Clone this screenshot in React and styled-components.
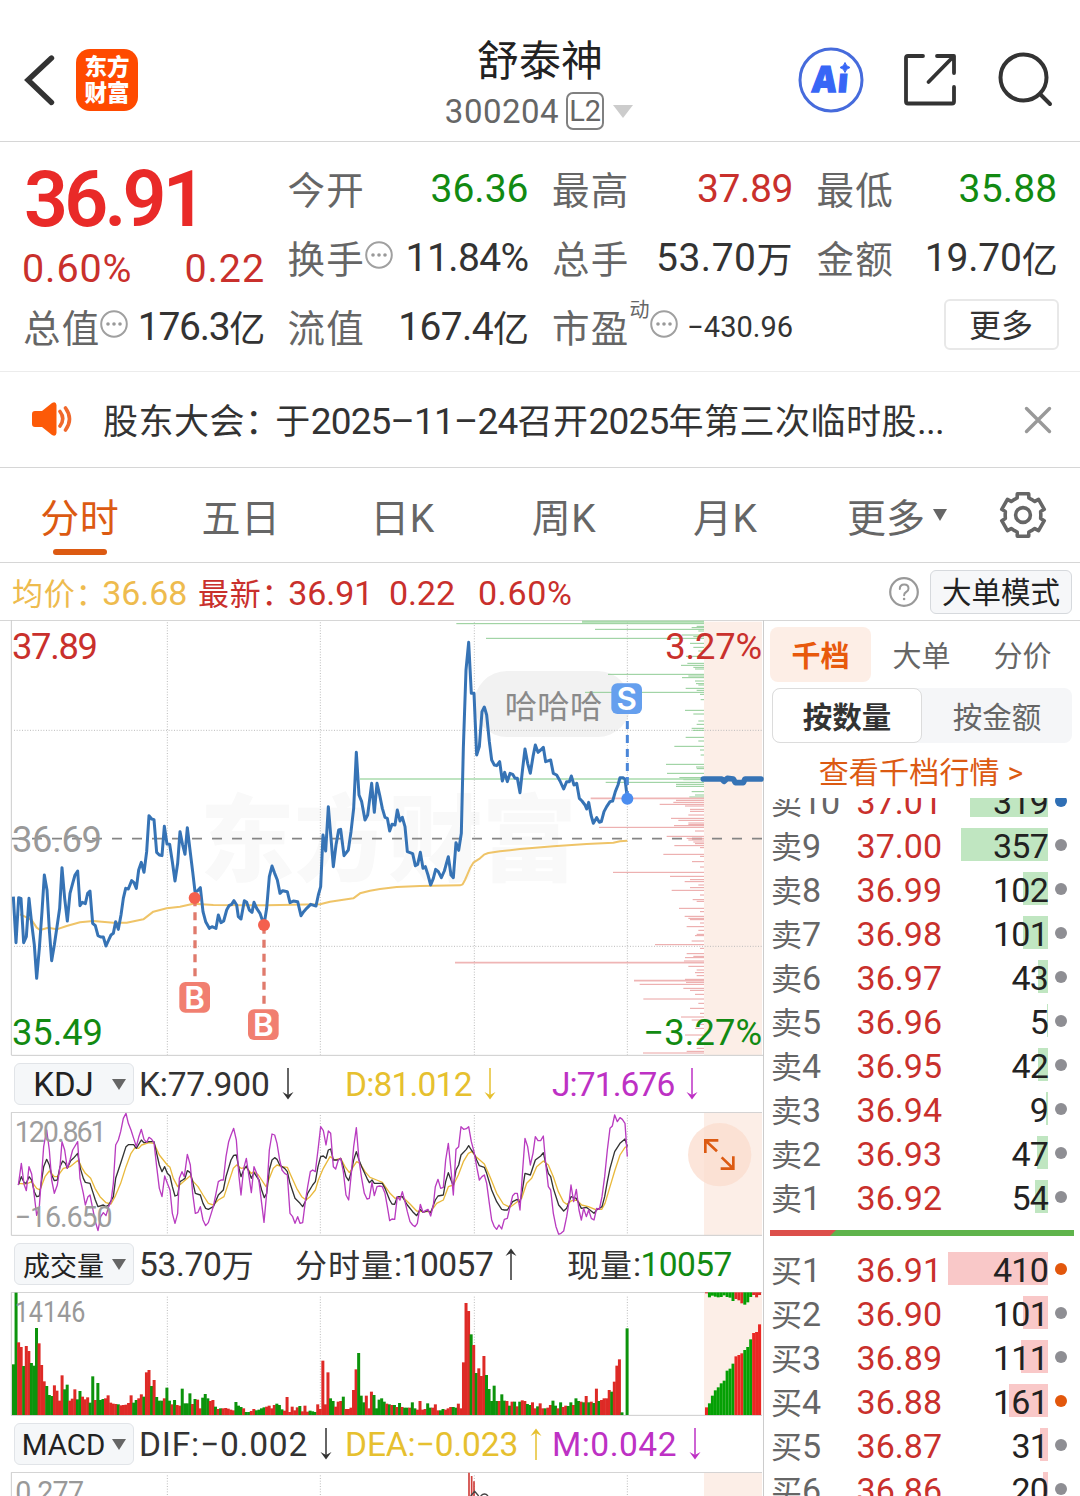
import React from "react";
import styled, { createGlobalStyle } from "styled-components";

const RED = "#c9302c";
const GREEN = "#128a12";
const YELLOW = "#e6c02f";
const PURPLE = "#bd31c4";
const ORANGE = "#dc5a12";

const GlobalStyle = createGlobalStyle`
  * {
    box-sizing: border-box;
  }
  body {
    margin: 0;
    background: #fff;
    color: #333;
    font-family: Roboto, "Noto Sans CJK SC", sans-serif;
  }
`;

/* ---------- chart data, three units to a pixel ---------- */

const shift = (points, dx) =>
  points
    .split(" ")
    .map((p) => {
      const [x, y] = p.split(",");
      return `${Number(x) + dx},${y}`;
    })
    .join(" ");

const HALF = 1140;

const priceLine =
  "40,845 48,983 56,848 63,850 71,983 79,965 87,850 95,925 103,990 110,1090 118,1000 126,890 133,780 141,825 148,945 155,1037 163,990 171,935 179,880 186,758 194,850 202,918 210,835 218,805 225,780 233,768 240,872 247,862 256,866 263,835 270,828 278,925 286,932 294,962 302,966 310,966 318,993 326,975 333,960 340,955 347,920 355,943 363,900 370,850 377,820 385,822 395,797 402,803 409,820 416,765 424,742 432,772 440,710 447,602 455,612 462,614 470,712 478,720 486,722 493,634 501,687 509,688 517,740 525,798 533,745 540,650 548,690 555,718 562,638 570,705 578,770 585,830 592,828 601,818 609,890 617,920 628,940 636,935 648,940 655,900 663,923 671,918 680,885 687,872 695,868 702,857 710,870 715,905 723,912 733,857 740,862 748,885 756,892 762,862 770,880 780,895 792,930 800,880 808,785 816,753 824,775 832,795 840,835 848,827 862,830 870,863 880,858 893,860 903,902 911,890 920,880 932,868 948,873 955,840 962,815 969,660 977,708 985,575 993,670 1000,755 1008,690 1016,645 1022,643 1032,722 1045,705 1053,650 1061,580 1069,412 1077,540 1085,560 1095,615 1103,600 1115,505 1123,592 1131,505 1139,540 1147,580 1155,607 1162,610 1169,648 " +
  shift(
    "36,628 45,630 52,585 60,618 67,607 75,635 82,710 98,716 106,752 113,748 121,712 129,760 136,755 144,780 152,810 160,790 167,763 175,770 184,788 193,768 205,725 213,780 220,788 228,683 236,706 244,655 250,400 258,165 266,82 274,235 282,235 290,420 298,395 306,290 313,276 320,300 328,380 335,435 343,450 350,452 359,440 367,498 374,472 382,500 390,475 398,478 405,490 412,490 420,533 428,460 435,402 443,445 451,475 459,425 466,390 474,412 482,405 490,397 497,440 512,435 520,475 530,480 540,498 551,522 560,500 568,500 574,483 582,510 590,505 598,550 606,558 615,570 620,582 626,562 633,600 640,625 650,608 658,622 664,620 672,590 680,575 690,560 698,558 706,530 714,510 720,488 728,488 735,492 742,550",
    HALF
  );

const averageLine =
  "60,898 75,905 95,915 110,938 120,945 145,938 170,943 200,933 240,922 280,918 340,923 380,923 430,913 460,890 500,880 540,875 580,866 640,870 800,871 960,868 990,860 1060,850 1080,835 1110,827 " +
  shift(
    "0,822 50,816 120,813 240,811 248,808 255,795 270,760 280,743 300,730 312,719 325,714 360,709 420,702 520,694 620,687 700,683 720,679 742,677",
    HALF
  );

const auctionLine = shift(
  "970,492 1025,492 1032,499 1042,490 1060,492 1066,503 1090,503 1095,492 1143,492",
  HALF
);

const jLine =
  "55,405 64,340 72,402 79,422 87,350 95,372 110,496 118,470 131,290 140,240 148,300 155,390 163,430 172,405 180,350 186,275 194,300 202,355 210,330 218,300 233,275 240,385 250,430 256,465 264,440 270,435 278,475 286,515 294,542 302,500 310,488 318,497 326,470 333,455 340,400 347,285 355,270 362,245 370,205 378,190 385,220 393,240 401,265 409,290 416,262 424,238 432,268 440,277 447,262 455,268 462,278 470,350 478,415 486,440 494,378 502,400 510,420 517,490 525,520 533,490 538,385 546,365 553,380 562,313 571,345 578,430 586,490 594,487 601,470 609,510 617,527 625,518 640,470 648,430 655,395 663,390 670,390 678,320 686,275 693,255 701,235 709,270 717,380 723,435 731,355 739,325 747,380 754,428 762,350 770,370 777,395 785,460 792,517 800,430 808,300 816,252 824,255 831,280 839,330 846,360 854,370 862,375 870,490 878,500 885,520 893,500 900,520 908,518 916,455 923,410 931,365 938,360 946,365 954,300 962,230 970,242 978,285 985,243 992,250 1000,350 1007,357 1015,330 1022,325 1030,365 1038,435 1046,450 1054,370 1061,290 1069,233 1077,330 1085,385 1093,430 1101,447 1108,445 1116,397 1123,437 1131,410 1139,408 1147,410 1155,430 1162,470 1169,512 " +
  shift(
    "36,507 44,508 52,440 60,450 67,425 75,455 82,485 90,515 98,525 105,530 112,520 121,463 129,487 136,482 144,478 152,498 160,465 166,410 174,388 182,415 190,412 197,330 205,280 213,360 220,435 228,298 236,290 243,230 251,238 259,236 266,230 274,275 282,305 290,350 298,390 306,380 313,375 320,400 328,460 335,510 343,530 350,538 357,525 365,537 373,508 382,505 390,470 398,437 405,430 412,430 420,480 428,360 435,265 443,290 451,345 459,310 466,260 474,272 482,272 490,258 497,340 505,410 512,420 520,490 528,530 536,553 543,550 551,543 560,500 568,450 573,405 581,455 589,418 597,480 604,510 611,475 619,500 626,480 634,505 642,510 650,475 658,478 666,440 674,380 682,300 690,235 697,228 704,195 712,215 720,203 727,208 735,220 742,320",
    HALF
  );

const kLine =
  "55,405 64,380 72,397 79,400 87,380 95,390 103,425 110,440 118,438 131,350 140,328 148,345 155,375 163,392 172,390 180,350 188,333 196,340 202,355 212,332 220,325 233,310 241,355 250,385 256,397 270,400 278,425 286,450 294,470 310,465 318,470 326,465 340,440 347,385 362,340 378,290 385,284 401,284 409,295 424,270 432,278 447,275 462,275 470,310 478,345 486,365 494,350 502,370 510,378 517,410 525,438 533,435 540,395 548,390 555,385 562,362 571,368 578,395 586,430 601,435 609,460 617,475 625,478 640,470 655,435 670,420 678,380 693,330 701,316 709,315 717,355 723,380 731,360 739,348 747,365 754,385 762,368 777,390 785,420 793,443 800,430 808,360 816,330 824,323 831,328 839,345 854,355 862,365 870,400 885,445 900,460 908,470 916,455 923,430 938,405 946,395 954,350 962,320 970,318 978,325 985,300 992,297 1000,330 1015,330 1022,325 1030,350 1038,380 1046,392 1054,365 1061,330 1069,305 1077,330 1085,350 1101,385 1108,398 1116,390 1123,400 1147,400 1155,415 1169,450 " +
  shift(
    "36,462 44,463 52,440 67,440 82,465 98,485 110,497 121,478 129,487 144,482 152,488 166,450 174,438 190,435 197,395 205,368 213,390 220,408 228,360 236,345 243,315 259,298 266,287 274,300 282,310 290,330 298,347 313,352 320,370 335,420 350,455 365,478 373,480 382,480 398,455 412,448 420,458 428,415 435,370 451,375 466,330 482,318 490,308 497,340 505,370 512,380 520,415 536,465 551,483 560,475 573,440 589,445 604,475 619,472 642,490 650,480 666,470 674,440 682,395 690,355 704,305 720,280 735,267 742,290",
    HALF
  );

const dLine =
  "55,400 79,402 95,395 110,415 120,420 135,380 148,363 163,380 172,380 190,355 210,350 235,330 245,352 256,370 272,385 285,415 300,440 318,458 333,462 345,440 362,400 378,350 393,310 405,293 416,295 425,285 447,278 462,280 478,315 490,330 502,345 510,352 520,385 533,410 550,395 570,378 580,395 594,410 609,435 625,460 640,465 655,450 672,440 685,400 700,355 710,345 723,355 739,352 754,370 762,365 775,375 785,390 798,410 808,385 820,355 831,345 845,350 862,352 872,375 890,415 905,440 918,450 930,440 946,420 955,390 970,355 990,320 1005,330 1022,325 1035,350 1048,368 1060,350 1070,335 1080,340 1095,365 1110,382 1130,390 1147,397 " +
  shift(
    "30,430 45,445 67,440 90,462 110,483 130,485 152,485 170,460 190,450 205,410 220,405 235,375 250,335 265,310 275,305 290,322 313,342 330,380 350,430 370,462 390,472 412,455 425,445 440,400 455,385 470,350 490,333 505,345 520,380 535,425 550,455 560,463 575,452 590,450 605,465 625,470 645,478 665,478 675,460 690,410 705,360 720,315 735,292 740,290",
    HALF
  );

// one bar a minute, below zero = falling minute
const volumes = [
  -152, -367, 218, 204, -147, 207, 192, -156, -148, -261, 215, 150, 101, -87,
  -60, -57, 89, 73, 43, 119, -77, -91, 43, 49, 77, -47, -72, 55, 47, 53, -37,
  -116, 45, -96, -45, -48, 50, 59, 37, 34, 33, -32, 29, 30, 31, 36, 59, -37,
  -45, 50, 62, -55, 128, 135, -87, 105, -54, -43, -43, 50, -82, -43, 32, -45,
  30, 28, -79, -35, -35, -65, 33, -48, 46, 20, -52, -63, -50, 42, 45, -25, 18,
  -20, 20, 21, 19, 16, 14, -39, -28, -24, 20, -9, -9, 12, 18, -14, -16, -20,
  -23, 25, 28, 20, 30, -34, -30, -17, 13, 54, 9, 25, 14, 23, -27, 11, 28, 10,
  -13, -11, -9, 32, 18, 163, 32, 128, -50, -42, 25, 40, 42, -55, 18, 18, 22,
  75, 137, -186, -58, -38, 58, 20, 70, -60, -20, -46, -50, -40, 34, -32, 30,
  -30, 24, -36, 24, -22, -22, 22, -38, -20, 16, 42, 16, 18, -35, -22, 22, 32,
  14, -14, -18, 16, 20, 24, -24, -22, 34, 20, 158, 336, 312, -242, 210, -126,
  140, 117, 177, -120, -78, -42, -88, -42, 42, -62, -43, 42, -28, 40, -40, 26,
  -40, 44, 42, -33, -30, 38, 20, -26, 35, 20, -20, 22, 30, -43, -28, 20, -38,
  24, 28, -27, -38, 30, -50, -42, 40, -38, 57, -38, 40, -36, 79, -42, 45, 50,
  50, 75, -70, 100, 148, 167, -8, 0, -260,
];

const auctionVolumes = [
  23, -35, -58, -74, -83, -95, -103, -133, -139, -154, 176, 180, 185, -195,
  -204, -227, 246, 249, 272,
];
const auctionRest = [
  3, -15, -10, -13, -15, -14, -9, -14, -16, -26, 20, 24, 33, -37, -30, -14, 8,
  15, 8,
];

// [y, left end] of resting orders at each price
const askDepth = [
  [20, 606], [26, 229], [34, 950], [38, 935], [43, 645], [48, 955], [60, 905],
  [70, 318], [65, 940], [85, 930], [97, 940], [108, 955], [124, 918],
  [145, 922], [151, 903], [157, 940], [162, 945], [178, 684], [183, 925],
  [188, 906], [198, 945], [206, 948], [220, 917], [210, 955], [226, 950],
  [232, 615], [238, 960], [254, 962], [286, 915], [297, 940], [318, 955],
  [328, 950], [340, 935], [346, 938], [367, 917], [378, 955], [394, 883],
  [405, 960], [420, 962], [448, 858], [456, 948], [461, 950], [475, 861],
  [488, 898], [494, 910], [502, 677], [508, 888], [514, 888], [530, 935],
  [540, 945], [546, 928],
];
const bidDepth = [
  [556, 888], [562, 880], [568, 839], [573, 915], [583, 930], [589, 930],
  [600, 925], [610, 873], [616, 895], [624, 925], [629, 925], [632, 882],
  [637, 657], [648, 945], [664, 860], [670, 920], [675, 925], [681, 940],
  [686, 945], [692, 883], [698, 960], [718, 850], [724, 960], [740, 936],
  [756, 960], [772, 699], [784, 870], [794, 930], [800, 914], [810, 955],
  [818, 930], [826, 875], [840, 960], [854, 938], [859, 950], [880, 897],
  [890, 960], [904, 914], [910, 925], [914, 930], [924, 960], [935, 920],
  [946, 955], [958, 950], [962, 945], [978, 935], [989, 825], [1000, 960],
  [1016, 920], [1024, 940], [1028, 915], [1038, 912], [1054, 925],
  [1065, 950], [1073, 945], [1082, 950], [1093, 915], [1102, 918],
  [1108, 779], [1120, 910], [1126, 930], [1138, 945], [1152, 790],
  [1165, 955], [1180, 930], [1195, 960], [1206, 903], [1215, 935],
  [1228, 950], [1240, 945], [1260, 915], [1272, 955], [1300, 950],
  [1309, 920], [1314, 789],
];

const sells = [
  ["卖10", "37.01", 319, "#2f6fb5"],
  ["卖9", "37.00", 357],
  ["卖8", "36.99", 102],
  ["卖7", "36.98", 101],
  ["卖6", "36.97", 43],
  ["卖5", "36.96", 5],
  ["卖4", "36.95", 42],
  ["卖3", "36.94", 9],
  ["卖2", "36.93", 47],
  ["卖1", "36.92", 54],
];

const buys = [
  ["买1", "36.91", 410, "#e2570c"],
  ["买2", "36.90", 101],
  ["买3", "36.89", 111],
  ["买4", "36.88", 161, "#e2570c"],
  ["买5", "36.87", 31],
  ["买6", "36.86", 20],
];

/* ---------- icons ---------- */

const BackIcon = () => (
  <svg width="36" height="56" viewBox="22 52 36 56" fill="none">
    <path d="M51.5 58 28 80l23.500 22.500" stroke="#333" strokeWidth="5.400" strokeLinecap="round" />
  </svg>
);

// the star stands in for the dot of the i
const AiIcon = () => (
  <svg width="66" height="66" viewBox="798 47 66 66" fill="#3766f6">
    <circle cx="831" cy="80" r="31" fill="#fff" stroke="#466bdc" strokeWidth="3" />
    <g transform="translate(811 91.500) skewX(-5)" fontFamily="Open Sans" fontSize="36" fontWeight="800" stroke="#3766f6" strokeWidth="1.400">
      <text x="0.500" y="0" textLength="24" lengthAdjust="spacingAndGlyphs">A</text>
      <text x="26" y="0.500" fontSize="32">ı</text>
    </g>
    <path d="M845 62.500q1 4 5 5-4 1-5 5-1-4-5-5 4-1 5-5Z" stroke="#3766f6" strokeWidth="1" />
  </svg>
);

const ShareIcon = () => (
  <svg width="56" height="56" viewBox="902 52 56 56" fill="none" stroke="#333" strokeWidth="3.800" strokeLinecap="round" strokeLinejoin="round">
    <path d="M923 56H908q-2 0-2 2v43.500q0 2 2 2h44q2 0 2-2V87" />
    <path d="M937 56h17v17M928.500 82 953 57" />
  </svg>
);

const SearchIcon = () => (
  <svg width="58" height="58" viewBox="996 51 58 58" fill="none" stroke="#333" strokeWidth="4" strokeLinecap="round">
    <circle cx="1023.500" cy="77.500" r="23" />
    <path d="m1040 94 10 10" />
  </svg>
);

const MoreDots = () => (
  <svg width="28" height="28" viewBox="0 0 28 28">
    <circle cx="14" cy="14" r="12.800" fill="none" stroke="#a0a0a0" strokeWidth="2" />
    {[8, 14, 20].map((x) => (
      <circle key={x} cx={x} cy="14" r="1.800" fill="#999" />
    ))}
  </svg>
);

const SpeakerIcon = () => (
  <svg width="42" height="36" viewBox="31 402 42 36">
    <path d="M35 411h7l10-8q4-2 4.500 2v28q-.5 4-4.500 2l-10-8h-7q-3 0-3-3v-10q0-3 3-3Z" fill="#fc5a08" />
    <path d="M60 411.500q5.500 7 0 14.500M65.500 408q8 11 0 22" fill="none" stroke="#f0682c" strokeWidth="3.600" strokeLinecap="round" />
  </svg>
);

const CloseIcon = () => (
  <svg width="28" height="28" viewBox="0 0 28 28" stroke="#999" strokeWidth="3.400" strokeLinecap="round">
    <path d="m2.500 2.500 23 23M25.500 2.500l-23 23" />
  </svg>
);

const gearPoints = [0, 60, 120, 180, 240, 300]
  .flatMap((a) => [
    [a - 28, 17.8],
    [a - 19, 18],
    [a - 15, 22],
    [a + 15, 22],
    [a + 19, 18],
    [a + 28, 17.8],
  ])
  .map(([a, r]) => {
    const t = ((a - 90) * Math.PI) / 180;
    return `${25 + r * Math.cos(t)},${25 + r * Math.sin(t)}`;
  })
  .join(" ");

const GearIcon = () => (
  <svg width="50" height="50" viewBox="0 0 50 50" fill="none" stroke="#666" strokeWidth="3.600" strokeLinejoin="round">
    <polygon points={gearPoints} />
    <circle cx="25" cy="25" r="7.400" />
  </svg>
);

const HelpIcon = () => (
  <svg width="30" height="30" viewBox="0 0 30 30">
    <circle cx="15" cy="15" r="13.800" fill="none" stroke="#999" strokeWidth="2.200" />
    <path d="M10.800 12q0-4.500 4.400-4.500 4.300 0 4.300 4 0 2.300-2.300 3.500-2.100 1.100-2.100 3.200" fill="none" stroke="#999" strokeWidth="2" strokeLinecap="round" />
    <circle cx="15.100" cy="22" r="1.300" fill="#999" />
  </svg>
);

const Arrow = ({ up, color }) => (
  <svg width="14" height="34" viewBox="0 0 14 34" transform={up ? "rotate(180)" : undefined}>
    <path d="M7 1v30" stroke={color} strokeWidth="1.500" />
    <path d="M1.500 25 7 32.500l5.500-7.500L7 28Z" fill={color} />
  </svg>
);

/* ---------- charts ---------- */

const COLS = [502, 961, 1423, 1882];

const Columns = ({ top, bottom }) =>
  COLS.map((x) => (
    <path key={x} d={`M${x} ${top}V${bottom}`} stroke="#bbb" strokeWidth="3" strokeDasharray="3 5" />
  ));

const Tag = ({ x, y, letter, color }) => (
  <g>
    <rect x={x - 46} y={y - 46} width="92" height="92" rx="18" fill={color} />
    <text x={x} y={y + 34} textAnchor="middle" fontFamily="Inter, Roboto, sans-serif" fontSize="94" fontWeight="600" fill="#fff">{letter}</text>
  </g>
);

const PriceChart = () => (
  <svg width="764" height="436" viewBox="0 15 2292 1308" fontFamily='Roboto, "Noto Sans CJK SC", sans-serif'>
    <text x="600" y="776" fontSize="284" fontWeight="900" letterSpacing="-2" fill="#f9f9f9">东方财富</text>
    <rect x="2112" y="20" width="174" height="1300" fill="#fceee7" />
    <rect x="1422" y="168" width="470" height="198" rx="99" fill="#f2f2f2" />
    <Columns top={22} bottom={1320} />
    <path d="M42 346H2286M42 994H2286" stroke="#bbb" strokeWidth="3" strokeDasharray="3 5" />
    <path d="M36 671H2286" stroke="#858585" strokeWidth="5" strokeDasharray="30 30" />
    <g strokeWidth="3">
      {askDepth.map(([y, x]) => (
        <path key={y} d={`M${x + HALF} ${y}H2112`} stroke="#90cc94" />
      ))}
      {bidDepth.map(([y, x]) => (
        <path key={y} d={`M${x + HALF} ${y}H2112`} stroke="#eaa2a2" />
      ))}
    </g>
    <path d="M1746 20H2112" stroke="#a9dbac" strokeWidth="7" />
    <path d="M1080 492H2112" stroke="#a9dbac" strokeWidth="5" />
    <path d="M1772 550H2112M1365 1043H2112M1902 1097H2112" stroke="#efb5b5" strokeWidth="5" />
    <text x="1514" y="310" fontSize="97" letterSpacing="1" fill="#8a8a8a">哈哈哈</text>
    <polyline points={averageLine} fill="none" stroke="#efc468" strokeWidth="6" strokeLinejoin="round" />
    <polyline points={priceLine} fill="none" stroke="#3673b5" strokeWidth="9" strokeLinejoin="round" />
    <polyline points={auctionLine} fill="none" stroke="#3673b5" strokeWidth="17" strokeLinecap="round" strokeLinejoin="round" />
    <g stroke="#e07a6c" strokeWidth="10" strokeDasharray="24 18">
      <path d="M585 850V1085" />
      <path d="M792 932V1168" />
    </g>
    <circle cx="584" cy="849" r="18" fill="#f4604e" />
    <circle cx="792" cy="930" r="18" fill="#f4604e" />
    <Tag x={584} y={1147} letter="B" color="#f17f70" />
    <Tag x={790} y={1229} letter="B" color="#f17f70" />
    <path d="M1882 318V550" stroke="#4a86d8" strokeWidth="9" strokeDasharray="24 18" />
    <circle cx="1882" cy="551" r="18" fill="#4b8df0" />
    <Tag x={1880} y={251} letter="S" color="#659fee" />
    <g fontSize="109">
      <text x="36" y="131" fill={RED} textLength="258">37.89</text>
      <text x="36" y="710" fill="#999" textLength="270">36.69</text>
      <text x="36" y="1289" fill={GREEN} textLength="273">35.49</text>
      <text x="2286" y="131" fill={RED} textAnchor="end" textLength="290">3.27%</text>
      <text x="2286" y="1289" fill={GREEN} textAnchor="end" textLength="356">−3.27%</text>
    </g>
    <path d="M34 15V1320M34 1321H2290" fill="none" stroke="#ccc" strokeWidth="3" />
  </svg>
);

const KdjChart = () => (
  <svg width="764" height="124" viewBox="0 186 2292 372" fontFamily="Roboto, sans-serif">
    <rect x="2112" y="188" width="174" height="368" fill="#fceee7" />
    <Columns top={195} bottom={550} />
    <g fill="none" strokeWidth="4" strokeLinejoin="round">
      <polyline points={dLine} stroke="#e9b93c" />
      <polyline points={kLine} stroke="#333" />
      <polyline points={jLine} stroke="#b93cc0" />
    </g>
    <g fontSize="86" fill="#999" opacity="0.95">
      <text x="44" y="276" textLength="276">120.861</text>
      <text x="44" y="530" textLength="294">−16.650</text>
    </g>
    <path d="M2286 187H34V556H2286" fill="none" stroke="#ccc" strokeWidth="3" />
    <circle cx="2159" cy="314" r="95" fill="#fbdccd" opacity="0.75" />
    <path d="M2116 309V271H2155M2118 273l33 31M2200 319V356H2162M2198 354l-33-32" fill="none" stroke={ORANGE} strokeWidth="8" />
  </svg>
);

const VolumeChart = () => (
  <svg width="764" height="124" viewBox="0 726 2292 372" fontFamily="Roboto, sans-serif">
    <rect x="2112" y="728" width="174" height="368" fill="#fceee7" />
    <Columns top={740} bottom={1090} />
    <path d="M2286 727H34V1096H2286" fill="none" stroke="#ccc" strokeWidth="3" />
    {volumes.map((v, i) => (
      <rect key={i} x={36 + i * 7.67} y={1095 - Math.abs(v)} width="9" height={Math.abs(v)} fill={v > 0 ? "#de2a26" : "#0c930c"} />
    ))}
    {auctionVolumes.map((v, i) => (
      <rect key={i} x={2115 + i * 8.84} y={1095 - Math.abs(v)} width="9" height={Math.abs(v)} fill={v > 0 ? "#ea2724" : "#04a004"} />
    ))}
    {auctionRest.map((v, i) => (
      <rect key={i} x={2115 + i * 8.84} y="727" width="9" height={Math.abs(v)} fill={v > 0 ? "#de2a26" : "#04a004"} />
    ))}
    <text x="44" y="816" fontSize="86" fill="#999" textLength="212" lengthAdjust="spacingAndGlyphs">14146</text>
  </svg>
);

const MacdChart = () => (
  <svg width="764" height="24" viewBox="0 1266 2292 72" fontFamily="Roboto, sans-serif">
    <rect x="2112" y="1268" width="174" height="70" fill="#fceee7" />
    <Columns top={1276} bottom={1338} />
    <path d="M34 1338V1267H2286" fill="none" stroke="#ccc" strokeWidth="3" />
    <path d="M1407 1268V1338M1415 1278V1338M1422 1294V1338" stroke="#d0403c" strokeWidth="5" />
    <path d="M1412 1338l12-14 12 14M1442 1338q12-12 22 0" fill="none" stroke="#444" strokeWidth="4" />
    <text x="46" y="1356" fontSize="86" fill="#999" textLength="206">0.277</text>
  </svg>
);

/* ---------- page ---------- */

const Cell = ({ label, sup, dots, value, unit, color, gap, small }) => (
  <QuoteCell>
    <Label>{label}</Label>
    {sup && <Sup>{sup}</Sup>}
    {dots && <MoreDots />}
    <Value $color={color} $gap={gap} $small={small}>
      {value}
      {unit && <Unit>{unit}</Unit>}
    </Value>
  </QuoteCell>
);

const OrderRow = ({ row, color }) => {
  const [label, price, amount, dot] = row;
  return (
    <Order>
      <OrderLabel>
        {label[0]}
        <b>{label.slice(1)}</b>
      </OrderLabel>
      <OrderPrice>{price}</OrderPrice>
      <Amount>
        <AmountBar $color={color} style={{ width: Math.max(1, amount * 0.244) }} />
        <span>{amount}</span>
      </Amount>
      <Dot $color={dot} />
    </Order>
  );
};

const Indicator = ({ name, size, drop, children }) => (
  <IndicatorBar>
    <Picker>
      <PickerName $size={size} $drop={drop}>{name}</PickerName>
      <Triangle $w={7} $h={11} $color="#666" />
    </Picker>
    {children}
  </IndicatorBar>
);

const App = () => (
  <Page>
    <GlobalStyle />
    <Header>
      <HeaderSide>
        <BackIcon />
        <Logo>
          <span>东方</span>
          <span>财富</span>
        </Logo>
      </HeaderSide>
      <Title>
        <Name>舒泰神</Name>
        <Code>
          300204
          <Level>L2</Level>
          <Triangle $w={10} $h={13} $color="#ccc" />
        </Code>
      </Title>
      <HeaderSide $end>
        <AiIcon />
        <ShareIcon />
        <SearchIcon />
      </HeaderSide>
    </Header>

    <Quote>
      <QuoteCol>
        <Price>36.91</Price>
        <Change>
          <span>0.60%</span>
          <span>0.22</span>
        </Change>
        <Cell label="总值" dots value="176.3" unit="亿" gap={-1.3} />
      </QuoteCol>
      <QuoteCol>
        <Cell label="今开" value="36.36" color={GREEN} />
        <Cell label="换手" dots value="11.84%" gap={-0.6} />
        <Cell label="流值" value="167.4" unit="亿" gap={-0.6} />
      </QuoteCol>
      <QuoteCol>
        <Cell label="最高" value="37.89" color={RED} gap={-0.4} />
        <Cell label="总手" value="53.70" unit="万" gap={0.5} />
        <Cell label="市盈" sup="动" dots value="−430.96" small />
      </QuoteCol>
      <QuoteCol>
        <Cell label="最低" value="35.88" color={GREEN} gap={0.2} />
        <Cell label="金额" value="19.70" unit="亿" gap={-0.2} />
        <QuoteCell>
          <MoreButton>更多</MoreButton>
        </QuoteCell>
      </QuoteCol>
    </Quote>

    <Notice>
      <SpeakerIcon />
      <NoticeText>
        股东大会<Colon>：</Colon>于<i>2025–11–24</i>召开<i>2025</i>年第三次临时股<i>...</i>
      </NoticeText>
      <CloseIcon />
    </Notice>

    <Tabs>
      <Tab $active>分时</Tab>
      <Tab>五日</Tab>
      <Tab>日K</Tab>
      <Tab>周K</Tab>
      <Tab>月K</Tab>
      <Tab $wide>
        更多
        <Triangle $w={7} $h={12} $color="#666" />
      </Tab>
      <GearIcon />
    </Tabs>

    <Legend>
      <LegendItem $color="#eebb4e" $width={186}>
        均价<Colon>：</Colon>
        <b>36.68</b>
      </LegendItem>
      <LegendItem $color={RED} $width={191}>
        最新<Colon>：</Colon>
        <b>36.91</b>
      </LegendItem>
      <LegendItem $color={RED} $width={89}>
        <b>0.22</b>
      </LegendItem>
      <LegendItem $color={RED} $gap={0.7}>
        <b>0.60%</b>
      </LegendItem>
      <LegendEnd>
        <HelpIcon />
        <ModeButton>大单模式</ModeButton>
      </LegendEnd>
    </Legend>

    <Body>
      <Charts>
        <PriceChart />
        <Indicator name="KDJ" size={33}>
          <Stat $width={206} $gap={-0.2}>K:77.900 <Arrow color="#333" /></Stat>
          <Stat $width={207} $gap={-0.8} $color={YELLOW}>D:81.012 <Arrow color={YELLOW} /></Stat>
          <Stat $gap={-0.9} $color={PURPLE}>J:71.676 <Arrow color={PURPLE} /></Stat>
        </Indicator>
        <KdjChart />
        <Indicator name="成交量" size={27} drop={5}>
          <Stat $width={156} $gap={-0.3}>53.70<em>万</em></Stat>
          <Stat $width={272} $gap={-0.5}><em>分时量</em>:10057 <Arrow up color="#333" /></Stat>
          <Stat $gap={-0.6}><em>现量</em>:<Up>10057</Up></Stat>
        </Indicator>
        <VolumeChart />
        <Indicator name="MACD" size={29.5}>
          <Stat $width={206} $gap={0.8}>DIF:−0.002 <Arrow color="#333" /></Stat>
          <Stat $width={207} $gap={-0.1} $color={YELLOW}>DEA:−0.023 <Arrow up color={YELLOW} /></Stat>
          <Stat $gap={0.5} $color={PURPLE}>M:0.042 <Arrow color={PURPLE} /></Stat>
        </Indicator>
        <MacdChart />
      </Charts>

      <Panel>
        <PanelTabs>
          <PanelTab $active>千档</PanelTab>
          <PanelTab>大单</PanelTab>
          <PanelTab>分价</PanelTab>
        </PanelTabs>
        <Segment>
          <SegmentItem $active>按数量</SegmentItem>
          <SegmentItem>按金额</SegmentItem>
        </Segment>
        <DepthLink>查看千档行情 &gt;</DepthLink>
        <SellList>
          {sells.map((row) => (
            <OrderRow key={row[0]} row={row} color="#c0e6c1" />
          ))}
        </SellList>
        <Ratio>
          <RatioBuy />
        </Ratio>
        {buys.map((row) => (
          <OrderRow key={row[0]} row={row} color="#f9c8c8" />
        ))}
      </Panel>
    </Body>
  </Page>
);

const Page = styled.div`
  width: 1080px;
  height: 1496px;
  overflow: hidden;
  background: #fff;
  svg {
    display: block;
    flex: none;
  }
`;

const Triangle = styled.span`
  flex: none;
  width: 0;
  height: 0;
  border-left: ${(p) => p.$w}px solid transparent;
  border-right: ${(p) => p.$w}px solid transparent;
  border-top: ${(p) => p.$h}px solid ${(p) => p.$color};
`;

const Header = styled.header`
  display: grid;
  grid-template-columns: 1fr 200px 1fr;
  height: 142px;
  border-bottom: 1px solid #d6d6d6;
`;

const HeaderSide = styled.div`
  display: flex;
  align-items: center;
  gap: ${(p) => (p.$end ? 38 : 18)}px;
  justify-content: ${(p) => (p.$end ? "flex-end" : "flex-start")};
  padding: 18px 26px 0 22px;
`;

const Logo = styled.div`
  display: flex;
  flex-direction: column;
  align-items: center;
  justify-content: center;
  width: 62px;
  height: 62px;
  padding-top: 1px;
  border-radius: 14px;
  background: #ff4a00;
  color: #fff;
  font-size: 22.500px;
  font-weight: 900;
  line-height: 26px;
`;

const Title = styled.div`
  display: flex;
  flex-direction: column;
  align-items: center;
  padding-top: 37px;
`;

const Name = styled.div`
  font-size: 42px;
  line-height: 50px;
  color: #222;
`;

const Code = styled.div`
  display: flex;
  align-items: center;
  height: 48px;
  margin-right: 2px;
  font-size: 33px;
  letter-spacing: 0.5px;
  color: #666;
`;

const Level = styled.span`
  width: 38px;
  height: 38px;
  margin: 0 9px 0 7px;
  border: 2px solid #808080;
  border-radius: 7px;
  font-size: 29px;
  line-height: 35px;
  letter-spacing: 0;
  text-align: center;
`;

const Quote = styled.section`
  display: grid;
  grid-template-columns: repeat(4, 240px);
  column-gap: 24.5px;
  height: 230px;
  padding: 12px 0 0 24px;
  border-bottom: 1px solid #ececec;
`;

const QuoteCol = styled.div`
  display: flex;
  flex-direction: column;
`;

const QuoteCell = styled.div`
  display: flex;
  align-items: center;
  justify-content: flex-end;
  height: 69px;
`;

const Label = styled.span`
  margin: 5px auto 0 -1px;
  font-size: 37.500px;
  letter-spacing: 1.2px;
  line-height: 60px;
  color: #666;
  & + svg {
    margin: -5px 0 0;
  }
  &:has(+ svg),
  &:has(+ sup) {
    margin-right: 0;
  }
`;

const Sup = styled.sup`
  align-self: flex-start;
  margin-top: 5px;
  font-size: 20px;
  line-height: 26px;
  color: #666;
  & + svg {
    margin: -5px 0 0 1px;
  }
`;

const Value = styled.span`
  margin-top: 1px;
  font-size: ${(p) => (p.$small ? 29 : 39)}px;
  letter-spacing: ${(p) => p.$gap || 0}px;
  line-height: 60px;
  color: ${(p) => p.$color || "#333"};
  svg + & {
    margin-left: auto;
  }
`;

const Unit = styled.span`
  position: relative;
  top: 2px;
  font-size: 36px;
`;

const Price = styled.div`
  height: 84px;
  padding-top: 4px;
  font-size: 77px;
  font-weight: 600;
  line-height: 84px;
  letter-spacing: -3.800px;
  color: #e92a28;
`;

const Change = styled.div`
  display: flex;
  justify-content: space-between;
  height: 54px;
  margin: 0 -1px 0 -2px;
  padding-top: 6px;
  font-size: 39.500px;
  line-height: 50px;
  letter-spacing: 0.9px;
  color: ${RED};
`;

const MoreButton = styled.button`
  width: 115px;
  height: 51px;
  margin: -4px -1px 0 0;
  padding: 1px 0 0;
  border: 2px solid #e8e8e8;
  border-radius: 6px;
  background: #fff;
  color: #333;
  font-family: inherit;
  font-size: 32px;
  line-height: 48px;
`;

const Notice = styled.section`
  display: flex;
  align-items: center;
  height: 96px;
  padding: 0 28px 0 31px;
  border-bottom: 1px solid #d6d6d6;
`;

const NoticeText = styled.div`
  flex: 1;
  margin: 5px 0 0 30px;
  font-size: 35px;
  letter-spacing: 0.5px;
  line-height: 50px;
  white-space: nowrap;
  color: #333;
  i {
    font-style: normal;
    font-size: 37px;
    letter-spacing: -0.8px;
  }
`;

const Colon = styled.span`
  letter-spacing: -0.14em;
`;

const Tabs = styled.nav`
  display: flex;
  align-items: center;
  height: 95px;
  border-bottom: 1px solid #d6d6d6;
`;

const Tab = styled.div`
  position: relative;
  display: flex;
  align-items: center;
  justify-content: center;
  gap: 8px;
  width: ${(p) => (p.$wide ? 182 : 161.400)}px;
  margin-right: ${(p) => (p.$wide ? 9 : 0)}px;
  height: 94px;
  padding-right: 2px;
  font-size: 39px;
  letter-spacing: ${(p) => (p.$wide ? 0 : 0.5)}px;
  color: ${(p) => (p.$active ? ORANGE : "#666")};
  &::after {
    content: "";
    display: ${(p) => (p.$active ? "block" : "none")};
    position: absolute;
    left: 53px;
    bottom: 7px;
    width: 54px;
    height: 6px;
    border-radius: 3px;
    background: ${ORANGE};
  }
`;

const Legend = styled.div`
  display: flex;
  align-items: center;
  height: 58px;
  padding: 0 8px 0 12px;
  border-bottom: 1px solid #d6d6d6;
`;

const LegendItem = styled.span`
  width: ${(p) => (p.$width ? `${p.$width}px` : "auto")};
  margin-top: 5px;
  font-size: 31px;
  line-height: 40px;
  letter-spacing: 0.8px;
  white-space: nowrap;
  color: ${(p) => p.$color};
  b {
    font-size: 34px;
    font-weight: 400;
    letter-spacing: ${(p) => p.$gap || -0.1}px;
  }
`;

const LegendEnd = styled.div`
  display: flex;
  align-items: center;
  gap: 11px;
  margin-left: auto;
`;

const ModeButton = styled.button`
  width: 142px;
  height: 44px;
  padding: 2px 0 0;
  border: 1px solid #d6d9dd;
  border-radius: 6px;
  background: #f6f7f9;
  color: #222;
  font-family: inherit;
  font-size: 29.500px;
  line-height: 40px;
`;

const Body = styled.main`
  display: grid;
  grid-template-columns: 764px 316px;
  margin-top: -1px;
`;

const Charts = styled.section`
  border-right: 1px solid #ccc;
`;

const IndicatorBar = styled.div`
  display: flex;
  align-items: center;
  height: 56px;
  padding: 0 0 0 14px;
`;

const Picker = styled.div`
  display: flex;
  align-items: center;
  width: 120px;
  height: 42px;
  margin-right: 5px;
  padding-right: 7px;
  border: 1px solid #e1e4e8;
  border-radius: 6px;
  background: #f5f7f9;
  color: #222;
`;

const PickerName = styled.span`
  flex: 1;
  padding-top: ${(p) => p.$drop || 1}px;
  font-size: ${(p) => p.$size}px;
  line-height: 40px;
  text-align: center;
`;

const Stat = styled.div`
  display: flex;
  align-items: center;
  flex: none;
  width: ${(p) => (p.$width ? `${p.$width}px` : "auto")};
  margin-top: 1px;
  font-size: 33.500px;
  line-height: 40px;
  letter-spacing: ${(p) => p.$gap}px;
  white-space: nowrap;
  color: ${(p) => p.$color || "#333"};
  em {
    margin-top: 2px;
    font-style: normal;
    font-size: 32px;
    letter-spacing: 1px;
  }
  svg {
    margin: -1px 0 0 11px;
  }
`;

const Up = styled.span`
  color: ${GREEN};
`;

const Panel = styled.aside`
  padding: 1px 6px 0 0;
`;

const PanelTabs = styled.div`
  display: grid;
  grid-template-columns: repeat(3, 101px);
  height: 67px;
  padding: 6px 0 0 6px;
`;

const PanelTab = styled.div`
  height: 55px;
  border-radius: 8px;
  background: ${(p) => (p.$active ? "#fdeee6" : "none")};
  color: ${(p) => (p.$active ? "#e8590c" : "#666")};
  font-size: 29px;
  font-weight: ${(p) => (p.$active ? 700 : 400)};
  line-height: 61px;
  text-align: center;
`;

const Segment = styled.div`
  display: grid;
  grid-template-columns: 1fr 1fr;
  width: 300px;
  height: 55px;
  margin-left: 8px;
  border-radius: 8px;
  background: #f5f6f8;
`;

const SegmentItem = styled.div`
  height: 55px;
  border: 1px solid ${(p) => (p.$active ? "#dcdcdc" : "transparent")};
  border-radius: 8px;
  background: ${(p) => (p.$active ? "#fff" : "none")};
  color: ${(p) => (p.$active ? "#333" : "#666")};
  font-size: 29.500px;
  font-weight: ${(p) => (p.$active ? 700 : 400)};
  line-height: 59px;
  text-align: center;
`;

const DepthLink = styled.div`
  height: 55px;
  padding-left: 4px;
  font-size: 30px;
  line-height: 59px;
  letter-spacing: 0.2px;
  text-align: center;
  color: ${ORANGE};
`;

const SellList = styled.div`
  display: flex;
  flex-direction: column;
  justify-content: flex-end;
  height: 423px;
  overflow: hidden;
`;

const Order = styled.div`
  display: grid;
  flex: none;
  grid-template-columns: 80px 91px 105px 12px;
  align-items: center;
  height: 44px;
  padding-left: 7px;
`;

const OrderLabel = styled.span`
  height: 44px;
  font-size: 31px;
  line-height: 42px;
  color: #666;
  white-space: nowrap;
  b {
    font-size: 34px;
    font-weight: 400;
  }
`;

const OrderPrice = styled.span`
  height: 44px;
  font-size: 34px;
  line-height: 42px;
  text-align: right;
  color: ${RED};
`;

const Amount = styled.span`
  position: relative;
  height: 44px;
  margin-right: -1px;
  font-size: 34px;
  line-height: 42px;
  letter-spacing: -0.8px;
  text-align: right;
  color: #222;
  span {
    position: relative;
  }
`;

const AmountBar = styled.i`
  position: absolute;
  top: 3px;
  right: 0;
  height: 33px;
  background: ${(p) => p.$color};
`;

const Dot = styled.i`
  width: 12px;
  height: 12px;
  margin: -5px 0 0 8px;
  border-radius: 50%;
  background: ${(p) => p.$color || "#8e8e93"};
`;

const Ratio = styled.div`
  height: 6px;
  margin: 9px 0 13px 6px;
  background: #5fb44c;
`;

const RatioBuy = styled.div`
  width: 66px;
  height: 6px;
  background: #dc4f4b;
  clip-path: polygon(0 0, 100% 0, 60px 100%, 0 100%);
`;

export default App;
